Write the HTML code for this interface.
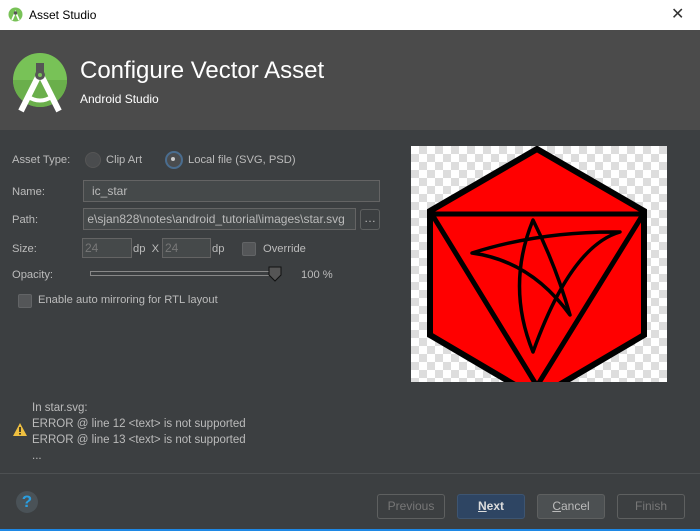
<!DOCTYPE html>
<html><head><style>
body{margin:0;width:700px;height:531px;background:#3c3f41;font-family:"Liberation Sans",sans-serif;position:relative;overflow:hidden;color:#bbbbbb;font-size:11.2px}
.a{position:absolute}
.l{margin-top:1px}
.tb{left:0;top:0;width:700px;height:30px;background:#fff;color:#000;font-size:12px}
.hd{left:0;top:30px;width:700px;height:100px;background:#4b4b4b}
.inp{background:#45494a;border:1px solid #646464;box-sizing:border-box;color:#bbb;padding-left:8px;line-height:20px;font-size:12px}
.btn{border:1px solid #5e6060;border-radius:3px;box-sizing:border-box;height:25px;width:68px;text-align:center;line-height:23px;font-size:12px}
.chk{width:12px;height:12px;background:#545658;border:1px solid #626466;border-radius:2px}
</style></head><body>
<div class="a tb">
<svg class="a" style="left:8px;top:7px" width="15" height="15"><circle cx="7.5" cy="7.5" r="7" fill="#78c257"/><path d="M4 13 L7.5 5 L11 13" stroke="#fff" stroke-width="1.6" fill="none"/><circle cx="7.5" cy="6" r="1.7" fill="#555"/></svg>
<span class="a" style="left:29px;top:8px">Asset Studio</span>
<span class="a" style="left:671px;top:4px;font-size:16px;color:#333">✕</span>
</div>
<div class="a hd">
<svg class="a" style="left:13px;top:23px" width="56" height="66"><circle cx="27" cy="27" r="27" fill="#78c257"/><path d="M0 27 A27 27 0 0 0 54 27Z" fill="#6aaf4b"/><path d="M8 58 L27 20 L46 58" stroke="#fff" stroke-width="6" fill="none"/><path d="M14 43 Q27 52 40 43" stroke="#fff" stroke-width="4" fill="none"/><rect x="23" y="10" width="8" height="10" fill="#555"/><circle cx="27" cy="22" r="5" fill="#555"/><circle cx="27" cy="22" r="2" fill="#78c257"/></svg>
<div class="a" style="left:80px;top:27px;font-size:24px;color:#fff">Configure Vector Asset</div>
<div class="a" style="left:80px;top:62px;font-size:12px;color:#fff">Android Studio</div>
</div>
<span class="a" style="left:12px;top:154px">Asset Type:</span>
<div class="a" style="left:85px;top:152px;width:14px;height:14px;border-radius:50%;background:#4a4c4e;border:1px solid #555"></div>
<span class="a" style="left:106px;top:154px">Clip Art</span>
<div class="a" style="left:165px;top:151px;width:14px;height:14px;border-radius:50%;background:#4a4c4e;border:2px solid #4a6d8f"></div>
<div class="a" style="left:171px;top:157px;width:4px;height:4px;border-radius:50%;background:#ccc"></div>
<span class="a" style="left:188px;top:154px">Local file (SVG, PSD)</span>
<span class="a" style="left:12px;top:186px">Name:</span>
<div class="a inp" style="left:83px;top:180px;width:297px;height:22px">ic_star</div>
<span class="a" style="left:12px;top:214px">Path:</span>
<div class="a inp" style="left:83px;top:208px;width:273px;height:22px;padding-left:0;overflow:hidden;white-space:nowrap">&nbsp;e\sjan828\notes\android_tutorial\images\star.svg</div>
<div class="a btn" style="left:360px;top:209px;width:20px;height:21px;line-height:17px">…</div>
<span class="a" style="left:12px;top:243px">Size:</span>
<div class="a inp" style="left:82px;top:238px;width:50px;height:20px;padding-left:2px;color:#777;line-height:18px">24</div>
<span class="a" style="left:133px;top:243px">dp&nbsp; X</span>
<div class="a inp" style="left:162px;top:238px;width:49px;height:20px;padding-left:2px;color:#777;line-height:18px">24</div>
<span class="a" style="left:212px;top:243px">dp</span>
<div class="a chk" style="left:242px;top:242px"></div>
<span class="a" style="left:263px;top:243px">Override</span>
<span class="a" style="left:12px;top:269px">Opacity:</span>
<div class="a" style="left:90px;top:271px;width:186px;height:3px;border:1px solid #888;background:#3c3f41"></div>
<svg class="a" style="left:268px;top:266px" width="14" height="16"><path d="M1 1H13V9L7 15L1 9Z" fill="#555" stroke="#111"/></svg>
<span class="a" style="left:301px;top:269px">100 %</span>
<div class="a chk" style="left:18px;top:294px"></div>
<span class="a" style="left:38px;top:294px">Enable auto mirroring for RTL layout</span>
<div class="a" style="left:411px;top:146px;width:256px;height:236px;background-color:#fff;background-image:linear-gradient(45deg,#ddd 25%,transparent 25%,transparent 75%,#ddd 75%),linear-gradient(45deg,#ddd 25%,transparent 25%,transparent 75%,#ddd 75%);background-size:16px 16px;background-position:0 0,8px 8px"></div>
<svg class="a" style="left:411px;top:146px" width="256" height="236">
<path d="M126 3 L19 65 L19 189 L126 252 L233 189 L233 65 Z" fill="#f00" stroke="#000" stroke-width="6"/>
<path d="M19 68 L233 68 M22 70 L126 240 L231 70" stroke="#000" stroke-width="5" fill="none"/>
<path d="M61 107 Q130 85 209 86 Q160 100 122 206 Q95 140 122 74 Q145 120 159 169 Q120 115 61 107Z" fill="none" stroke="#000" stroke-width="3.5" stroke-linejoin="round"/>
</svg>
<svg class="a" style="left:12px;top:422px" width="16" height="15"><path d="M8 1L15 14H1Z" fill="#f0c040"/><rect x="7.2" y="5" width="1.6" height="5" fill="#222"/><rect x="7.2" y="11" width="1.6" height="1.6" fill="#222"/></svg>
<div class="a" style="left:32px;top:400px;line-height:16px;font-size:11.5px">In star.svg:<br>ERROR @ line 12 &lt;text&gt; is not supported<br>ERROR @ line 13 &lt;text&gt; is not supported<br>...</div>
<div class="a" style="left:0;top:473px;width:700px;height:1px;background:#4d5052"></div>
<div class="a" style="left:16px;top:491px;width:22px;height:22px;border-radius:50%;background:#4a5257;color:#2a9ee0;font-weight:bold;font-size:17px;text-align:center;line-height:22px">?</div>
<div class="a btn" style="left:377px;top:494px;color:#777">Previous</div>
<div class="a btn" style="left:457px;top:494px;background:#2e4563;border-color:#3d5572;color:#ddd;font-weight:bold"><u>N</u>ext</div>
<div class="a btn" style="left:537px;top:494px;background:#4c5052;color:#bbb"><u>C</u>ancel</div>
<div class="a btn" style="left:617px;top:494px;color:#777">Finish</div>
<div class="a" style="left:0;top:529px;width:700px;height:2px;background:#1e88e5"></div>
</body></html>
